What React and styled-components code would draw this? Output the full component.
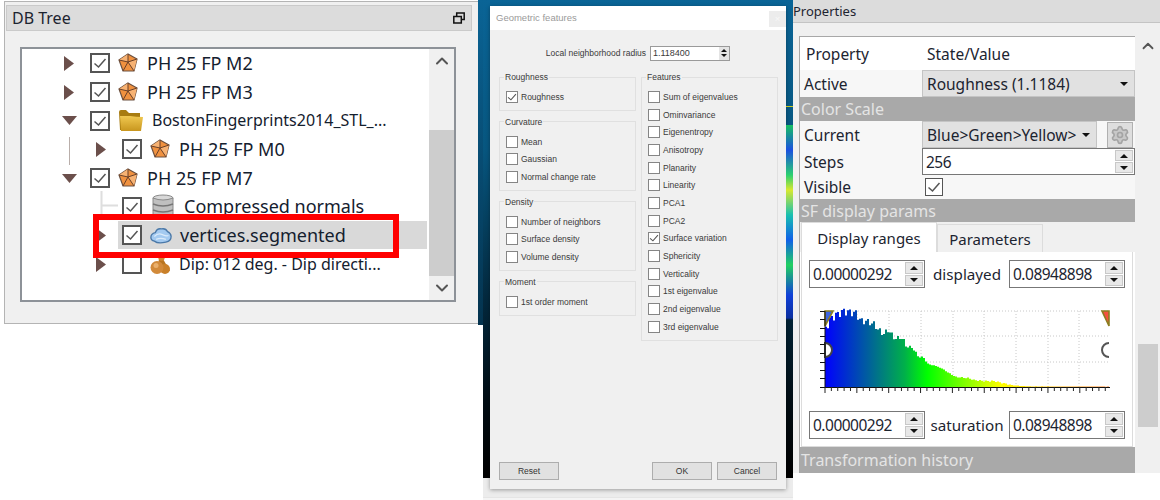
import React from "react";
import styled, { createGlobalStyle } from "styled-components";
import { ChevronUp, ChevronDown, Settings } from "lucide-react";

const Global = createGlobalStyle`
  html, body { margin: 0; padding: 0; background: #fff; }
  body { font-family: "Noto Sans", "Open Sans", sans-serif; color: #1c2430; }
  * { box-sizing: border-box; }
`;

const Page = styled.div`
  display: flex;
  width: 1160px;
  height: 500px;
  overflow: hidden;
`;

/* ---------- DB tree ---------- */

const LeftColumn = styled.div`
  display: flex;
  align-items: flex-start;
  width: 483px;
  padding: 1px 0 0 4px;
`;

const TreePanel = styled.section`
  width: 474px;
  height: 323px;
  padding: 3px 6px 0 1px;
  background: #f0f0f0;
  border: 1px solid #b4b4b4;
  border-right: none;
`;

const Sliver = styled.div`
  width: 5px;
  height: 325px;
  margin-top: -1px;
  background: linear-gradient(#0a6496, #04334e);
`;

const DockTitle = styled.header`
  display: flex;
  align-items: center;
  justify-content: space-between;
  height: 26px;
  padding: 0 6px 0 5px;
  background: #dcdcdc;
  border: 1px solid #cacaca;
  font-size: 16px;
`;

const TreeBox = styled.div`
  position: relative;
  display: flex;
  width: 436px;
  height: 255px;
  margin: 16px 0 0 14px;
  background: #fff;
  border: 2px solid #8d9298;
`;

const TreeList = styled.div`
  flex: 1;
  min-width: 0;
`;

const Row = styled.div`
  display: flex;
  align-items: center;
  height: 28.7px;
  padding: 0 2px 0 40px;
`;

const Indent = styled.div`
  flex: none;
  width: 32px;
  height: 100%;
  &::before {
    content: "";
    display: ${p => (p.$guide ? "block" : "none")};
    width: 1px;
    height: 28px;
    margin: 2px 0 0 7px;
    background: #b9aeaa;
  }
`;

const ExpanderSlot = styled.div`
  flex: none;
  display: flex;
  align-items: center;
  justify-content: center;
  width: 14px;
  height: 100%;
  margin-right: 10px;
  svg { overflow: visible; }
`;

const Item = styled.div`
  flex: 1;
  min-width: 0;
  display: flex;
  align-items: center;
  gap: 8px;
  height: 28px;
  padding-left: 4px;
  background: ${p => (p.$selected ? "#d9d9d9" : "transparent")};
`;

const TreeCheck = styled.span`
  flex: none;
  display: flex;
  align-items: center;
  justify-content: center;
  width: 20px;
  height: 20px;
  background: #fff;
  border: 2px solid #555;
`;

const TreeLabel = styled.span`
  margin-top: -1px;
  font-size: ${p => (p.$small ? "16px" : "18px")};
  white-space: nowrap;
  color: #14202e;
`;

const TreeScroll = styled.div`
  flex: none;
  display: flex;
  flex-direction: column;
  align-items: center;
  width: 25px;
  background: #f0f0f0;
`;

const ArrowCell = styled.div`
  flex: none;
  display: flex;
  align-items: ${p => (p.$top ? "flex-start" : "center")};
  justify-content: center;
  width: 100%;
  height: ${p => p.$h}px;
  padding-top: ${p => p.$top || 0}px;
  color: #555;
`;

const TreeThumb = styled.div`
  width: 25px;
  height: 146px;
  background: #cdcdcd;
`;

const RedBox = styled.div`
  position: absolute;
  left: 71px;
  top: 165px;
  width: 306px;
  height: 44px;
  border: 6px solid #f00;
  pointer-events: none;
`;

/* ---------- centre: dialog over the dark viewport ---------- */

const Backdrop = styled.div`
  display: flex;
  align-items: flex-start;
  width: 310px;
  height: 500px;
  background: linear-gradient(
    #0a6496 0, #07567f 150px, #03283d 300px, #010d14 400px, #000 478px,
    #ececec 478px, #ececec 497px, #d6d6d6 497px, #f4f4f4 498px
  );
`;

const Dialog = styled.div`
  flex: none;
  display: flex;
  flex-direction: column;
  width: 296px;
  height: 483px;
  margin: 6px 0 0 7px;
  background: #f0f0f0;
  box-shadow: 0 1px 4px rgba(0, 0, 0, 0.35);
  font-family: "Liberation Sans", Arial, sans-serif;
  font-size: 8.5px;
  color: #3a3a3a;
`;

const DialogTitle = styled.div`
  flex: none;
  display: flex;
  justify-content: space-between;
  height: 24px;
  padding-left: 6px;
  background: #fff;
  font-size: 9.5px;
  line-height: 24px;
  color: #9a9a9a;
`;

const CloseButton = styled.div`
  width: 17px;
  height: 16px;
  margin-top: 5px;
  background: #ececec;
  color: #f8f8f8;
  text-align: center;
  line-height: 16px;
`;

const RadiusRow = styled.div`
  flex: none;
  display: flex;
  align-items: center;
  justify-content: flex-end;
  gap: 4px;
  height: 14px;
  margin: 16px 56px 0 0;
`;

const SmallSpin = styled.div`
  display: flex;
  align-items: center;
  justify-content: space-between;
  width: 80px;
  height: 15px;
  padding: 0 0 0 2px;
  background: #fff;
  border: 1px solid #9a9a9a;
  font-size: 9px;
`;

const SmallSpinButton = styled.div`
  flex: none;
  display: flex;
  flex-direction: column;
  align-items: center;
  justify-content: center;
  gap: 2px;
  width: 10px;
  height: 100%;
  background: #e4e4e4;
`;

const Columns = styled.div`
  flex: none;
  display: flex;
  gap: 5px;
  margin: 11px 8px 0 9px;
`;

const Column = styled.div`
  display: flex;
  flex-direction: column;
  gap: 5px;
  width: 137px;
`;

const Group = styled.fieldset`
  margin: 0;
  padding: 5px 6px 4px;
  min-width: 0;
  border: 1px solid #e0e0e0;

  legend {
    margin-left: -2px;
    padding: 0 1px;
    font-size: 8.5px;
    line-height: 12px;
  }
`;

const CheckRow = styled.label`
  display: flex;
  align-items: center;
  gap: 3px;
  height: 17.7px;
  white-space: nowrap;
`;

const DialogBox = styled.span`
  flex: none;
  display: flex;
  align-items: center;
  justify-content: center;
  width: 12px;
  height: 12px;
  background: #fff;
  border: 1px solid #858585;
`;

const DialogFooter = styled.div`
  display: flex;
  gap: 5px;
  margin: auto 9px 9px 9px;
`;

const PushButton = styled.button`
  width: 60px;
  height: 18px;
  margin-left: ${p => (p.$push ? "auto" : "0")};
  padding: 0;
  background: #e1e1e1;
  border: 1px solid #adadad;
  font: inherit;
  color: #333;
`;

const HeatStrip = styled.div`
  flex: none;
  width: 7px;
  height: 478px;
  background: linear-gradient(
    transparent 106px, #c8c820 106px, #c8c820 107px, transparent 107px, transparent 125px,
    #16c060 125px, #1a50e0 150px, #2ad070 175px, #d8e830 190px, #18c0b0 215px, #1060e8 240px,
    #20d060 265px, #1040d8 295px, #0c30a0 318px, transparent 320px
  );
`;

/* ---------- properties ---------- */

const PropsPanel = styled.section`
  width: 367px;
  height: 473px;
  background: #f0f0f0;
  overflow: hidden;
`;

const PropsTitle = styled.header`
  height: 23px;
  background: #dcdcdc;
  border-bottom: 1px solid #c4c4c4;
  font-size: 13px;
  line-height: 22px;
`;

const PropsBody = styled.div`
  display: flex;
  gap: 2px;
  height: 450px;
  padding: 13px 2px 0 6px;
`;

const PropsTable = styled.div`
  flex: none;
  width: 336px;
  background: #fff;
  border: 1px solid #a8a8a8;
  border-right: none;
  border-bottom: none;
  font-size: 15.5px;
`;

const PropRow = styled.div`
  display: grid;
  grid-template-columns: 122px 1fr;
  align-items: center;
  height: ${p => p.$h}px;
  background: ${p => (p.$head ? "#fff" : "#f7f7f7")};
`;

const PropName = styled.div`
  padding-left: ${p => (p.$head ? "6px" : "4px")};
`;

const PropValue = styled.div`
  display: flex;
  align-items: center;
  height: 100%;
  min-width: 0;
  padding-left: ${p => (p.$head ? "5px" : "0")};
  background: ${p => (p.$head ? "#fff" : "transparent")};
`;

const Section = styled.div`
  height: ${p => p.$h}px;
  padding-left: 1px;
  background: #a9a9a9;
  color: #e4e4e4;
  font-size: 16px;
  line-height: ${p => p.$h + 1}px;
  white-space: nowrap;
`;

const Combo = styled.div`
  flex: ${p => (p.$w ? "none" : "1")};
  display: flex;
  align-items: center;
  justify-content: space-between;
  width: ${p => (p.$w ? `${p.$w}px` : "auto")};
  height: 100%;
  padding: 0 6px 0 4px;
  background: #e1e1e1;
  border: 1px solid #c4c4c4;
  white-space: nowrap;
`;

const GearButton = styled.div`
  flex: none;
  display: flex;
  align-items: center;
  justify-content: center;
  width: 26px;
  height: 26px;
  margin-left: 10px;
  background: #dedede;
  border: 1px solid #b0b0b0;
  color: #a4a4a4;
`;

const SpinBox = styled.div`
  display: flex;
  align-items: center;
  justify-content: space-between;
  width: ${p => (p.$w ? `${p.$w}px` : "100%")};
  height: ${p => p.$h || 28}px;
  padding: 1px 1px 1px 3px;
  background: #fff;
  border: 1px solid #777;
`;

const SpinValue = styled.span`
  letter-spacing: -0.5px;
`;

const SpinButtons = styled.div`
  flex: none;
  display: flex;
  flex-direction: column;
  gap: 1px;
  width: 18px;
  height: 100%;
`;

const SpinButton = styled.div`
  flex: 1;
  display: flex;
  align-items: center;
  justify-content: center;
  background: #e8e8e8;
  border: 1px solid #c8c8c8;
`;

const Tri = styled.span`
  display: block;
  width: 0;
  height: 0;
  border-left: ${p => p.$s || 4}px solid transparent;
  border-right: ${p => p.$s || 4}px solid transparent;
  ${p => (p.$up ? "border-bottom" : "border-top")}: ${p => p.$s || 4}px solid #111;
`;

const VisibleBox = styled.span`
  display: flex;
  align-items: center;
  justify-content: center;
  width: 18px;
  height: 18px;
  margin-left: 3px;
  background: #fff;
  border: 1px solid #555;
`;

const TabBar = styled.div`
  display: flex;
  align-items: flex-end;
  height: 30px;
  padding-left: 1px;
  background: #f0f0f0;
`;

const Tab = styled.div`
  width: ${p => p.$w}px;
  height: ${p => (p.$active ? 30 : 28)}px;
  background: ${p => (p.$active ? "#fff" : "#f0f0f0")};
  border: 1px solid #dcdcdc;
  border-bottom: none;
  text-align: center;
  font-size: 15px;
  line-height: ${p => (p.$active ? 31 : 29)}px;
`;

const TabPane = styled.div`
  width: 332px;
  height: 195px;
  margin-left: 1px;
  padding: 8px 7px 0;
  background: #fff;
  border: 1px solid #dcdcdc;
  border-top: none;
`;

const RangeRow = styled.div`
  display: flex;
  align-items: center;
  justify-content: space-between;
  margin-top: ${p => p.$top || 0}px;
`;

const RangeLabel = styled.span`
  font-size: 15.2px;
  white-space: nowrap;
`;

const Chart = styled.svg`
  display: block;
  width: 310px;
  height: 95px;
  margin: 13px 0 0 1px;
`;

const PropsScroll = styled.div`
  flex: none;
  width: 21px;
  display: flex;
  flex-direction: column;
  align-items: center;
`;

const PropsThumb = styled.div`
  width: 20px;
  height: 83px;
  margin-top: 288px;
  background: #cdcdcd;
`;

/* ---------- drawings ---------- */

const Expander = ({ kind }) => {
  if (kind === "right") {
    return <svg width="11" height="15"><path d="M0 0 L10 7.5 L0 15 Z" fill="#6b4f4b" /></svg>;
  }
  if (kind === "down") {
    return <svg width="15" height="9"><path d="M0 0 H15 L7.5 9 Z" fill="#6b4f4b" /></svg>;
  }
  if (kind === "branch") {
    return (
      <svg width="14" height="29">
        <path d="M7.5 -1 V28 M7.5 13.5 H24" stroke="#dedede" strokeWidth="2" fill="none" />
      </svg>
    );
  }
  return null;
};

const Check = ({ size = 14, color = "#555" }) => (
  <svg width={size} height={size} viewBox="0 0 14 14">
    <path d="M1.5 7.5 L5.5 11 L12.5 3" fill="none" stroke={color} strokeWidth="1.5" />
  </svg>
);

const MeshIcon = () => (
  <svg width="21" height="20" viewBox="0 0 21 20">
    <path d="M10 1 L19 6 L16 18 L5 18 L1 7 Z" fill="#f0913f" stroke="#6a5040" strokeWidth="1.2" />
    <path d="M10 9 L10 1 L1 7 Z M10 9 L16 18 L19 6 Z" fill="#f7b273" />
    <path d="M10 1 L10 9 M19 6 L10 9 M16 18 L10 9 L5 18 M1 7 L10 9" stroke="#6a4028" strokeWidth="1" fill="none" />
  </svg>
);

const FolderIcon = () => (
  <svg width="26" height="22" viewBox="0 0 26 22">
    <defs>
      <linearGradient id="folder" x1="0" x2="0" y1="0" y2="1">
        <stop offset="0" stopColor="#f0c850" />
        <stop offset="1" stopColor="#c8961e" />
      </linearGradient>
    </defs>
    <path d="M1 2 Q1 0 3 0 H8 L11 3 H22 V20 H2 Z" fill="#a87c10" />
    <path d="M2 6 H12 Q18 7 25 7 L23 21 H3 Z" fill="url(#folder)" />
  </svg>
);

const DatabaseIcon = () => (
  <svg width="26" height="26" viewBox="0 0 26 26">
    <ellipse cx="13" cy="4" rx="10" ry="3" fill="#d8d8d8" stroke="#8a8a8a" />
    <path d="M3 4 V22 Q13 26 23 22 V4 Q13 8 3 4" fill="#c0c0c0" stroke="#8a8a8a" />
    <path d="M3 10 Q13 14 23 10 M3 16 Q13 20 23 16" fill="none" stroke="#777" strokeWidth="1.4" />
  </svg>
);

const CloudIcon = () => (
  <svg width="22" height="17" viewBox="0 0 25 18" preserveAspectRatio="none">
    <path d="M1 11 Q1 7 6 6 Q8 1 13 2 Q18 1 20 5 Q24 7 24 10 Q24 15 18 16 Q9 18 5 15 Q1 14 1 11 Z"
      fill="#a4caf0" stroke="#4a78a8" strokeWidth="1.5" />
    <path d="M5 10 Q9 6 14 8 T21 9 M7 13 Q12 11 18 13" fill="none" stroke="#dcebfa" strokeWidth="1.4" />
  </svg>
);

const DipIcon = () => (
  <svg width="21" height="20" viewBox="0 0 21 20">
    <path d="M9 5 L13 5 L20 17 L7 17 Z" fill="#b8741f" />
    <circle cx="11.5" cy="3.5" r="3.2" fill="#d08a34" />
    <circle cx="15" cy="15" r="5" fill="#c98029" />
    <circle cx="7" cy="13.5" r="6.5" fill="#d28a3a" />
    <circle cx="6" cy="11.5" r="2.5" fill="#eab06c" />
  </svg>
);

const RestoreIcon = () => (
  <svg width="12" height="12" viewBox="0 0 12 12" fill="none" stroke="#111" strokeWidth="1.5">
    <rect x="3.7" y="1" width="7.5" height="6.5" />
    <rect x="0.8" y="4.5" width="7.5" height="6.5" fill="#dcdcdc" />
  </svg>
);

/* top of the histogram, px above the axis, sampled along x */
const profile = [
  [15, 59], [20, 69], [27, 73], [33, 76], [38, 75], [45, 74], [50, 66], [55, 66], [63, 63], [67, 58],
  [72, 53], [78, 57], [83, 49], [92, 49], [95, 41], [102, 39], [107, 31], [113, 29], [117, 23], [125, 21],
  [132, 18], [138, 14], [145, 10], [157, 9], [163, 7], [173, 6], [183, 6], [192, 4], [200, 2], [210, 1],
  [220, 0.6], [299, 0.4],
];

const heightAt = x => {
  for (let i = 1; i < profile.length; i++) {
    const [x0, y0] = profile[i - 1];
    const [x1, y1] = profile[i];
    if (x <= x1) return y0 + ((y1 - y0) * (x - x0)) / (x1 - x0);
  }
  return 0;
};

const histogramPath = () => {
  let d = "M15 86";
  for (let x = 15; x < 299; x += 2) {
    const h = heightAt(x);
    const noise = (Math.sin(x * 7.3) + Math.sin(x * 2.1)) * Math.min(2.2, h / 10);
    d += ` V${(86 - Math.max(0, h + noise)).toFixed(1)} H${x + 2}`;
  }
  return d + " V86 Z";
};

const gridX = [47, 79, 111, 143, 174, 206, 238, 269];
const gridY = [10, 35, 61];
const leftTicks = [10, 18, 27, 35, 43, 52, 61, 69, 77];

const Histogram = () => {
  const minor = [];
  for (let x = 15, i = 0; x < 299; x += 6.37, i++) minor.push([x, i % 5 === 0]);
  return (
    <Chart viewBox="0 0 310 95">
      <defs>
        <linearGradient id="sf" gradientUnits="userSpaceOnUse" x1="15" x2="299" y1="0" y2="0">
          <stop offset="0" stopColor="#0000ff" />
          <stop offset="0.28" stopColor="#00b04a" />
          <stop offset="0.36" stopColor="#00ff00" />
          <stop offset="0.62" stopColor="#ffff00" />
          <stop offset="1" stopColor="#ff7a1a" />
        </linearGradient>
      </defs>
      {gridX.map(x => (
        <line key={x} x1={x} x2={x} y1="10" y2="86" stroke="#c8c8c8" strokeDasharray="1 2" />
      ))}
      {gridY.map(y => (
        <line key={y} x1="15" x2="299" y1={y} y2={y} stroke="#c8c8c8" strokeDasharray="1 2" />
      ))}
      <path d={histogramPath()} fill="url(#sf)" />
      <path d="M15 10 H23 L15 25 Z" fill="#3f66e0" stroke="#8b7d20" strokeWidth="1.6" />
      <path d="M299 10 H292 L299 25 Z" fill="#f4523f" stroke="#8b7d20" strokeWidth="1.6" />
      <path d="M15 42 A7 7 0 0 1 15 56 Z" fill="#fff" stroke="#444" strokeWidth="2" />
      <path d="M299 42 A7 7 0 0 0 299 56" fill="#fff" stroke="#555" strokeWidth="2" />
      <line x1="10" x2="300" y1="86.5" y2="86.5" stroke="#111" />
      <line x1="15" x2="15" y1="10" y2="86" stroke="#111" />
      {leftTicks.map(y => (
        <line key={y} x1="10" x2="15" y1={y + 0.5} y2={y + 0.5} stroke="#111" />
      ))}
      {minor.map(([x, major]) => (
        <line key={x} x1={x} x2={x} y1="86" y2={major ? 92 : 90} stroke="#222" />
      ))}
    </Chart>
  );
};

/* ---------- data ---------- */

const treeRows = [
  { label: "PH 25 FP M2", icon: MeshIcon, exp: "right", checked: true },
  { label: "PH 25 FP M3", icon: MeshIcon, exp: "right", checked: true },
  { label: "BostonFingerprints2014_STL_...", icon: FolderIcon, exp: "down", checked: true, small: true },
  { label: "PH 25 FP M0", icon: MeshIcon, exp: "right", checked: true, depth: 1, guide: true },
  { label: "PH 25 FP M7", icon: MeshIcon, exp: "down", checked: true },
  { label: "Compressed normals", icon: DatabaseIcon, exp: "branch", checked: true, depth: 1 },
  { label: "vertices.segmented", icon: CloudIcon, exp: "right", checked: true, depth: 1, selected: true },
  { label: "Dip: 012 deg. - Dip directi...", icon: DipIcon, exp: "right", depth: 1, small: true },
];

const groups = [
  { title: "Roughness", items: [["Roughness", true]] },
  { title: "Curvature", items: [["Mean"], ["Gaussian"], ["Normal change rate"]] },
  { title: "Density", items: [["Number of neighbors"], ["Surface density"], ["Volume density"]] },
  { title: "Moment", items: [["1st order moment"]] },
];

const features = [
  ["Sum of eigenvalues"], ["Ominvariance"], ["Eigenentropy"], ["Anisotropy"], ["Planarity"],
  ["Linearity"], ["PCA1"], ["PCA2"], ["Surface variation", true], ["Sphericity"], ["Verticality"],
  ["1st eigenvalue"], ["2nd eigenvalue"], ["3rd eigenvalue"],
];

const FeatureCheck = ({ label, checked }) => (
  <CheckRow>
    <DialogBox>{checked && <Check size={10} />}</DialogBox>
    {label}
  </CheckRow>
);

const Spin = ({ value, w, h, s }) => (
  <SpinBox $w={w} $h={h}>
    <SpinValue>{value}</SpinValue>
    <SpinButtons>
      <SpinButton><Tri $up $s={s} /></SpinButton>
      <SpinButton><Tri $s={s} /></SpinButton>
    </SpinButtons>
  </SpinBox>
);

export default function App() {
  return (
    <Page>
      <Global />
      <LeftColumn>
        <TreePanel>
          <DockTitle>DB Tree<RestoreIcon /></DockTitle>
          <TreeBox>
            <TreeList>
              {treeRows.map(r => {
                const Icon = r.icon;
                return (
                  <Row key={r.label}>
                    {r.depth && <Indent $guide={r.guide} />}
                    <ExpanderSlot><Expander kind={r.exp} /></ExpanderSlot>
                    <Item $selected={r.selected}>
                      <TreeCheck>{r.checked && <Check />}</TreeCheck>
                      <Icon />
                      <TreeLabel $small={r.small}>{r.label}</TreeLabel>
                    </Item>
                  </Row>
                );
              })}
            </TreeList>
            <TreeScroll>
              <ArrowCell $h={81} $top={2}><ChevronUp size={20} strokeWidth={2.4} /></ArrowCell>
              <TreeThumb />
              <ArrowCell $h={24}><ChevronDown size={20} strokeWidth={2.4} /></ArrowCell>
            </TreeScroll>
            <RedBox />
          </TreeBox>
        </TreePanel>
        <Sliver />
      </LeftColumn>

      <Backdrop>
        <Dialog>
          <DialogTitle>Geometric features<CloseButton>×</CloseButton></DialogTitle>
          <RadiusRow>
            Local neighborhood radius
            <SmallSpin>
              1.118400
              <SmallSpinButton><Tri $up $s={3} /><Tri $s={3} /></SmallSpinButton>
            </SmallSpin>
          </RadiusRow>
          <Columns>
            <Column>
              {groups.map(g => (
                <Group key={g.title}>
                  <legend>{g.title}</legend>
                  {g.items.map(([label, checked]) => (
                    <FeatureCheck key={label} label={label} checked={checked} />
                  ))}
                </Group>
              ))}
            </Column>
            <Column>
              <Group>
                <legend>Features</legend>
                {features.map(([label, checked]) => (
                  <FeatureCheck key={label} label={label} checked={checked} />
                ))}
              </Group>
            </Column>
          </Columns>
          <DialogFooter>
            <PushButton>Reset</PushButton>
            <PushButton $push>OK</PushButton>
            <PushButton>Cancel</PushButton>
          </DialogFooter>
        </Dialog>
        <HeatStrip />
      </Backdrop>

      <PropsPanel>
        <PropsTitle>Properties</PropsTitle>
        <PropsBody>
          <PropsTable>
            <PropRow $head $h={33}>
              <PropName $head>Property</PropName>
              <PropValue $head>State/Value</PropValue>
            </PropRow>
            <PropRow $h={27}>
              <PropName>Active</PropName>
              <PropValue><Combo>Roughness (1.1184)<Tri /></Combo></PropValue>
            </PropRow>
            <Section $h={24}>Color Scale</Section>
            <PropRow $h={27}>
              <PropName>Current</PropName>
              <PropValue>
                <Combo $w={175}>Blue&gt;Green&gt;Yellow&gt;<Tri /></Combo>
                <GearButton><Settings size={20} fill="#c8c8c8" /></GearButton>
              </PropValue>
            </PropRow>
            <PropRow $h={27}>
              <PropName>Steps</PropName>
              <PropValue><Spin value="256" h={27} /></PropValue>
            </PropRow>
            <PropRow $h={24}>
              <PropName>Visible</PropName>
              <PropValue><VisibleBox><Check /></VisibleBox></PropValue>
            </PropRow>
            <Section $h={23}>SF display params</Section>
            <TabBar>
              <Tab $active $w={136}>Display ranges</Tab>
              <Tab $w={106}>Parameters</Tab>
            </TabBar>
            <TabPane>
              <RangeRow>
                <Spin value="0.00000292" w={116} />
                <RangeLabel>displayed</RangeLabel>
                <Spin value="0.08948898" w={116} />
              </RangeRow>
              <Histogram />
              <RangeRow $top={15}>
                <Spin value="0.00000292" w={116} />
                <RangeLabel>saturation</RangeLabel>
                <Spin value="0.08948898" w={116} />
              </RangeRow>
            </TabPane>
            <Section $h={26}>Transformation history</Section>
          </PropsTable>
          <PropsScroll>
            <ArrowCell $h={20}><ChevronUp size={18} strokeWidth={2.4} /></ArrowCell>
            <PropsThumb />
          </PropsScroll>
        </PropsBody>
      </PropsPanel>
    </Page>
  );
}
